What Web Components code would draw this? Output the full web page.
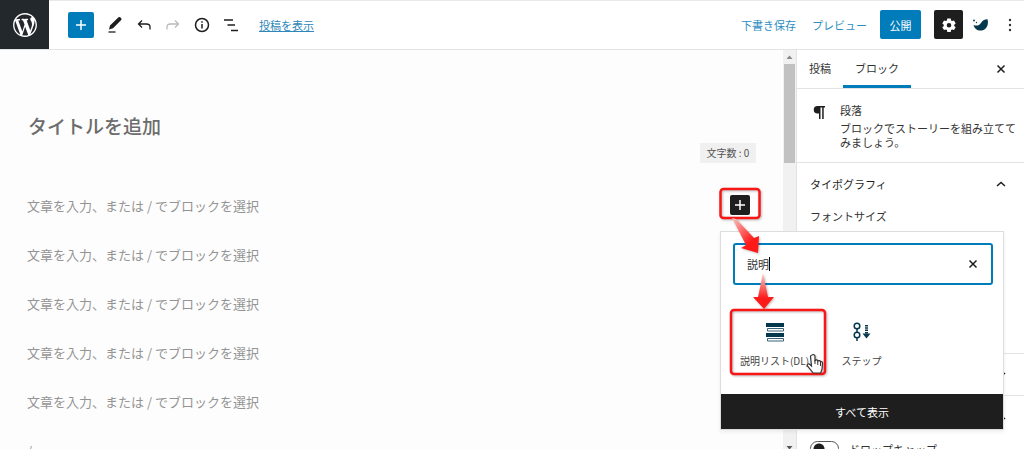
<!DOCTYPE html>
<html lang="ja">
<head>
<meta charset="utf-8">
<title>投稿を編集</title>
<style>
html,body{margin:0;height:100%}
body{font-family:"Noto Sans CJK JP","Noto Sans",sans-serif;font-size:11px;line-height:14px;color:#1e1e1e;overflow:hidden;
--blue:#007cba;--ink:#1e1e1e;--line:#e2e4e4;--brand:#04384c}
</style>
</head>
<body>
<post-editor></post-editor>
<script>
const define=(name,html)=>customElements.define(name,class extends HTMLElement{
  constructor(){
    super();
    const t=document.createElement('template');
    t.innerHTML=html;
    this.attachShadow({mode:'open'}).append(t.content.cloneNode(true));
  }
});

define('tool-button',`<style>
:host{display:block;flex:none}
button{display:grid;place-items:center;width:26px;height:26px;padding:0;border:0;border-radius:2px;background:var(--bg,transparent);color:var(--fg,#1e1e1e)}
:host([large]) button{width:29px;height:29px}
:host([small]) button{width:20px;height:20px}
</style><button type="button"><slot></slot></button>`);

define('editor-header',`<style>
:host{display:flex;align-items:center;height:49px;background:#fff;border-bottom:1px solid #e4e4e4;flex:none;box-shadow:inset 0 1px #e9e9e9}
.logo{display:grid;place-items:center;width:49px;height:49px;background:#23282d;margin-right:19px}
.primary{--bg:var(--blue);--fg:#fff;margin-right:5px}
.tools,.actions{display:flex;align-items:center}
.tools{gap:3px;flex:1}
.off{--fg:#bbb}
.dark{--bg:var(--ink);--fg:#fff;margin-left:13px}
a{color:#2e86b9;white-space:nowrap}
.view{margin-left:12px}
.text{background:none;border:0;padding:0;font:inherit;color:#2e8dc0;white-space:nowrap}
.preview{margin-left:16px}
.publish{height:29px;width:41px;padding:0;margin-left:13px;border:0;border-radius:2px;background:var(--blue);color:#fff;font:inherit}
.bird{margin-left:5px}
.more{margin-right:1px;margin-left:3px}
</style>
<a class="logo" href="#" aria-label="投稿一覧"><svg width="26" height="26" viewBox="0 0 24 24" fill="#fff"><path d="M20 10c0-5.51-4.49-10-10-10C4.48 0 0 4.49 0 10c0 5.52 4.48 10 10 10 5.51 0 10-4.48 10-10zM7.78 15.37L4.37 6.22c.55-.02 1.17-.08 1.17-.08.5-.06.44-1.13-.06-1.11 0 0-1.45.11-2.37.11-.18 0-.37 0-.58-.01C4.12 2.69 6.87 1.11 10 1.11c2.33 0 4.45.87 6.05 2.34-.68-.11-1.65.39-1.65 1.58 0 .74.45 1.36.9 2.1.35.61.55 1.36.55 2.46 0 1.49-1.4 5-1.4 5l-3.03-8.37c.54-.02.82-.17.82-.17.5-.05.44-1.25-.06-1.22 0 0-1.44.12-2.38.12-.87 0-2.33-.12-2.33-.12-.5-.03-.56 1.2-.06 1.22l.92.08 1.26 3.41zM17.41 10c.24-.64.74-1.87.43-4.25.7 1.29 1.05 2.71 1.05 4.25 0 3.29-1.73 6.24-4.4 7.78.97-2.59 1.94-5.2 2.92-7.78zM6.1 18.09C3.12 16.65 1.11 13.53 1.11 10c0-1.3.23-2.48.72-3.59C3.25 10.3 4.67 14.2 6.1 18.09zm4.03-6.63l2.58 6.98c-.86.29-1.76.45-2.71.45-.79 0-1.57-.11-2.29-.33.81-2.38 1.62-4.74 2.42-7.1z" transform="translate(1 1) scale(1.1)"/></svg></a>
<div class="tools">
<tool-button class="primary"><svg width="16" height="16" viewBox="0 0 16 16" stroke="currentColor" stroke-width="1.5"><path d="M8 3v10M3 8h10"/></svg></tool-button>
<tool-button><svg width="18" height="18" viewBox="0 0 18 18"><path d="M4 9.500 12.500 1.300q.8-.8 1.700 0l1 .9q.8.800 0 1.700L7 12.200 3 13.500z" fill="currentColor"/><path d="M2.500 16h7" stroke="currentColor" stroke-width="1.300"/></svg></tool-button>
<tool-button><svg width="18" height="18" viewBox="0 0 18 18" fill="none" stroke="currentColor" stroke-width="1.300"><path d="M7 4.500 3.500 8 7 11.500M3.500 8h8q3.500 0 3.500 3v2.500"/></svg></tool-button>
<tool-button class="off"><svg width="18" height="18" viewBox="0 0 18 18" fill="none" stroke="currentColor" stroke-width="1.300"><path d="M11 4.500 14.500 8 11 11.500M14.500 8h-8Q3 8 3 11v2.500"/></svg></tool-button>
<tool-button><svg width="18" height="18" viewBox="0 0 18 18" fill="none" stroke="currentColor" stroke-width="1.500"><circle cx="9" cy="9" r="6.500"/><path d="M9 8v4.500M9 5.200v1.500"/></svg></tool-button>
<tool-button><svg width="18" height="18" viewBox="0 0 18 18" stroke="currentColor" stroke-width="1.400"><path d="M2 4h9M5.500 9H13M9 14.500h7"/></svg></tool-button>
<a class="view" href="#">投稿を表示</a>
</div>
<div class="actions">
<button class="text" type="button">下書き保存</button>
<button class="text preview" type="button">プレビュー</button>
<button class="publish" type="button">公開</button>
<tool-button class="dark" large><svg width="16" height="16" viewBox="0 0 16 16"><path fill="currentColor" fill-rule="evenodd" d="M6.300 1.500h3.400l.4 2 1 .6 1.900-.7 1.700 3L13.200 7.700v1.200l1.500 1.300-1.700 2.900-1.900-.7-1 .6-.4 2H6.300l-.4-2-1-.6-1.900.7-1.700-2.900 1.500-1.300V7.700L1.300 6.400l1.700-3 1.900.7 1-.6zM8 6a2.300 2.300 0 1 0 0 4.600A2.300 2.300 0 0 0 8 6z"/></svg></tool-button>
<tool-button class="bird"><svg width="18" height="18" viewBox="0 0 18 18" fill="#04384c"><path d="M1.500 9c3 1.200 6 .5 7.500-2 1.300-2.300 3.200-3.600 6.500-3.800 1.300 4.500-.3 9-4 10.800-4.500 1.800-9-.5-10-5z"/><circle cx="2" cy="4.500" r=".9"/><circle cx="4.500" cy="6.500" r=".7"/></svg></tool-button>
<tool-button class="more"><svg width="18" height="18" viewBox="0 0 18 18" fill="#333"><circle cx="9" cy="4" r="1.200"/><circle cx="9" cy="9" r="1.200"/><circle cx="9" cy="14" r="1.200"/></svg></tool-button>
</div>`);

define('scroll-rail',`<style>
:host{display:flex;flex-direction:column;align-items:center;width:13px;background:#f1f1f1;flex:none}
svg{flex:none}
.thumb{width:11px;height:22%;min-height:99px;background:#c1c1c1}
.space{flex:1}
</style>
<svg width="13" height="14" viewBox="0 0 13 14"><path d="M3.500 9 6.500 5.500 9.500 9z" fill="#888"/></svg>
<div class="thumb"></div><div class="space"></div>
<svg width="13" height="4" viewBox="0 0 13 4"><path d="M3.500 1h6l-3 3.500z" fill="#555"/></svg>`);

define('writing-canvas',`<style>
:host{display:flex;flex:1;min-width:0;background:#fdfdfd}
.page{flex:1;min-width:0;padding:62px 27px 0 27px}
h1{margin:0 1px;font-size:19px;line-height:28px;font-weight:500;color:#6c6c6c}
.count{display:flex;justify-content:flex-end;margin-top:3px}
.count span{background:#f0f0f0;color:#555;font-size:10px;line-height:20px;width:56px;text-align:center}
.row{display:flex;align-items:flex-start;height:21px;margin-bottom:28px}
.row.first{margin-top:32px}
p{flex:1;margin:0;font-size:13px;line-height:21px;color:#949494}
.add{--bg:var(--ink);--fg:#fff;margin-right:6px}
</style>
<div class="page">
<h1>タイトルを追加</h1>
<div class="count"><span>文字数 : 0</span></div>
<div class="row first"><p>文章を入力、または / でブロックを選択</p><tool-button class="add" small><svg width="14" height="14" viewBox="0 0 14 14" stroke="currentColor" stroke-width="1.500"><path d="M7 2v10M2 7h10"/></svg></tool-button></div>
<div class="row"><p>文章を入力、または / でブロックを選択</p></div>
<div class="row"><p>文章を入力、または / でブロックを選択</p></div>
<div class="row"><p>文章を入力、または / でブロックを選択</p></div>
<div class="row"><p>文章を入力、または / でブロックを選択</p></div>
<div class="row"><p>/</p></div>
</div>
<scroll-rail></scroll-rail>`);

define('panel-section',`<style>
:host{display:block;border-bottom:1px solid var(--line);padding:0 13px}
button{display:flex;justify-content:space-between;align-items:center;width:100%;height:41px;padding:0;border:0;background:none;font:inherit;color:inherit}
svg{margin-right:5px}
:host([closed]) svg{transform:rotate(180deg)}
</style>
<button type="button"><slot name="title"><span></span></slot><svg width="10" height="8" viewBox="0 0 10 8" fill="none" stroke="#1e1e1e" stroke-width="1.500"><path d="M1 6 5 2.500 9 6"/></svg></button>
<slot></slot>`);

define('block-sidebar',`<style>
:host{display:block;width:228px;flex:none;background:#fff;border-left:1px solid var(--line);box-sizing:border-box;overflow:hidden}
nav{display:flex;align-items:center;height:38px;border-bottom:1px solid var(--line)}
nav button{height:38px;border:0;border-bottom:3px solid transparent;background:none;font:inherit;color:#333;padding:0 12px}
nav button.on{border-color:var(--blue)}
nav tool-button{margin-left:auto;margin-right:10px}
.card{display:flex;gap:11px;height:58px;padding:14px 0 1px 12px;border-bottom:1px solid var(--line)}
.card svg{flex:none}
.card p,.card h2{margin:0;font:inherit;color:#333}
.card h2{margin-bottom:4px}
.size{margin:5px 0 130px;color:#333}
label{display:flex;align-items:center;gap:10px;padding-top:4px;color:#333}
input{appearance:none;margin:0;width:29px;height:15px;border:1px solid #555;border-radius:8px;background:radial-gradient(circle at 8px 7px,#1e1e1e 5px,transparent 6px)}
</style>
<nav><button type="button">投稿</button><button type="button" class="on">ブロック</button><tool-button><svg width="10" height="10" viewBox="0 0 10 10" stroke="#1e1e1e" stroke-width="1.500"><path d="m1.500 1.500 7 7m0-7-7 7"/></svg></tool-button></nav>
<section class="card"><svg width="20" height="20" viewBox="0 0 20 20"><path d="M9 3h7v1.500h-1.300V16h-1.500V4.500h-1.700V16H10v-5.500H8.500a3.700 3.700 0 0 1 0-7.500z" fill="#1e1e1e"/></svg><div><h2>段落</h2><p>ブロックでストーリーを組み立ててみましょう。</p></div></section>
<panel-section><span slot="title">タイポグラフィ</span><div class="size">フォントサイズ</div></panel-section>
<panel-section closed></panel-section>
<panel-section><label><input type="checkbox" role="switch">ドロップキャップ</label></panel-section>`);

define('block-choice',`<style>
:host{display:block;width:87px}
button{display:flex;flex-direction:column;align-items:center;gap:12px;width:100%;padding:13px 0 10px;border:0;background:none;font:inherit;font-size:10px;color:#444;white-space:nowrap}
</style><button type="button"><slot name="icon"></slot><span><slot></slot></span></button>`);

define('block-inserter',`<style>
:host{display:block;width:282px;background:#fff;border:1px solid #ddd;box-shadow:0 2px 4px #0001}
.search{position:relative;display:flex;align-items:center;height:38px;margin:11px 10px 24px 12px;border:2px solid var(--blue);border-radius:3px}
input{flex:1;min-width:0;border:0;outline:0;padding:0 0 0 12px;background:none;font:inherit;color:#333}
.search tool-button{margin-right:5px}
.caret{position:absolute;left:34px;top:12px;width:1px;height:14px;background:#000}
.choices{display:flex;padding:0 10px;height:85px}
.all{display:block;width:100%;height:35px;border:0;background:var(--ink);color:#fff;font:inherit}
</style>
<div class="search"><input type="text" aria-label="ブロックを検索" value="説明"><i class="caret"></i><tool-button><svg width="10" height="10" viewBox="0 0 10 10" stroke="#1e1e1e" stroke-width="1.500"><path d="m1.500 1.500 7 7m0-7-7 7"/></svg></tool-button></div>
<div class="choices">
<block-choice><svg slot="icon" width="20" height="20" viewBox="0 0 20 20"><path d="M1 1h18v4H1zM1 11h18v4H1z" fill="#04384c"/><path d="M2.500 6.500h16V9h-16zM2.500 16.500h16V19h-16z" fill="#fff" stroke="#3a6275"/></svg>説明リスト(DL)</block-choice>
<block-choice><svg slot="icon" width="20" height="20" viewBox="0 0 20 20" fill="none" stroke="#04384c" stroke-width="1.500"><circle cx="5" cy="4" r="2.800"/><circle cx="5" cy="13" r="2.800"/><path d="M5 6.800v3.400M5 15.800V19"/><path d="M14.500 3v9" stroke-width="3" stroke-dasharray="1.500 .8"/><path d="M10.500 11.500h8l-4 5z" fill="#04384c" stroke="none"/></svg>ステップ</block-choice>
</div>
<button class="all" type="button">すべて表示</button>`);

define('guide-marks',`<style>:host{display:block;pointer-events:none}svg{display:block;filter:drop-shadow(1px 1px 1px #0004)}</style>
<svg width="124" height="200" viewBox="712 184 124 200">
<defs><linearGradient id="a" x1="0" y1="0" x2=".8" y2="1"><stop offset="0" stop-color="#f9c4c0"/><stop offset=".75" stop-color="#ff1a1a"/></linearGradient>
<linearGradient id="b" x1="0" y1="0" x2="0" y2="1"><stop offset="0" stop-color="#f9d0cc"/><stop offset=".7" stop-color="#ff1a1a"/></linearGradient></defs>
<g fill="none" stroke="#f81616" stroke-width="2.500"><rect x="720.500" y="189" width="39" height="29" rx="3"/><rect x="731" y="310" width="94" height="64" rx="3"/></g>
<path d="M732 218l4 1 18 19 5-2-1 17-17-5 5-3z" fill="url(#a)"/>
<path d="M763 273l5 24h6l-10 12-11-12h5z" fill="url(#b)"/>
<path d="M812 355c1.500-1 3 0 3 1.500v4c1-1 2.500-.6 2.800.4 1-.7 2.500-.3 2.700.8 1-.4 2 .2 2 1.300 0 4-.3 7-1.800 10h-7.500c-2-2.500-4-5-6-7.500 0-1.700 1.500-2 3-.8l1.300 1.200-1-9.500c0-.7.700-1.300 1.500-1.400z" fill="#fff" stroke="#333" stroke-width="1.200"/><path d="M815 360v4m2.800-3.500V365m2.700-3.500V366" stroke="#333"/>
</svg>`);

define('post-editor',`<style>
:host{position:relative;display:flex;flex-direction:column;height:100%;overflow:hidden}
main{display:flex;flex:1;min-height:0}
writing-canvas,block-sidebar{overflow:hidden}
block-inserter{position:absolute;top:231px;right:20px}
guide-marks{position:absolute;top:184px;right:188px}
</style>
<editor-header></editor-header>
<main><writing-canvas></writing-canvas><block-sidebar></block-sidebar></main>
<block-inserter></block-inserter>
<guide-marks></guide-marks>`);
</script>
</body>
</html>
